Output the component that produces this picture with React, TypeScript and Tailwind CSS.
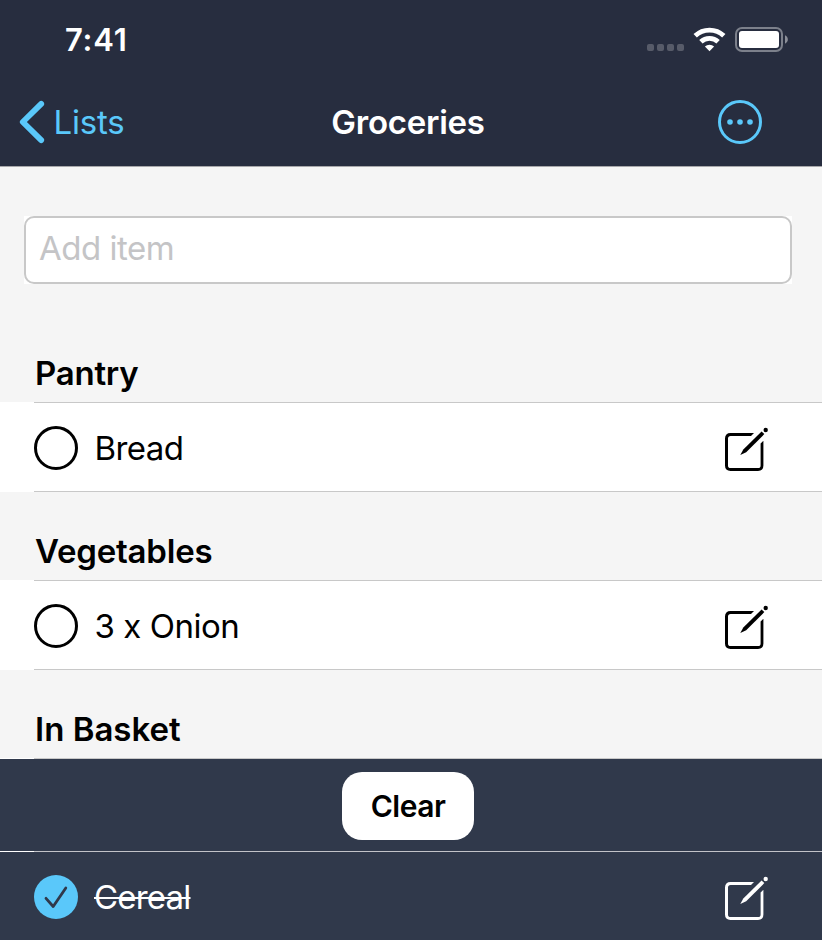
import React from "react";

function StatusIcons() {
  return (
    <svg width="146" height="32" viewBox="644 22 146 32" aria-hidden="true">
      <g fill="#575b69">
        <rect x="647" y="44" width="7" height="7" rx="2" />
        <rect x="657" y="44" width="7" height="7" rx="2" />
        <rect x="667" y="44" width="7" height="7" rx="2" />
        <rect x="677" y="44" width="7" height="7" rx="2" />
      </g>
      <g fill="none" stroke="#fff" strokeWidth="4.8">
        <path d="M695.2 35.8 A20.6 20.6 0 0 1 723.8 35.8" />
        <path d="M700.9 41.8 A12.4 12.4 0 0 1 718.1 41.8" />
      </g>
      <path d="M709.5 51.2 L704.9 46.6 A6.6 6.6 0 0 1 714.1 46.6 Z" fill="#fff" />
      <rect x="736" y="28" width="46" height="23" rx="6" fill="none" stroke="#7c808b" strokeWidth="2" />
      <rect x="739" y="31" width="40" height="17" rx="3" fill="#fff" />
      <path d="M785 35.3 C788.8 37 788.8 42 785 43.7 Z" fill="#8c8f99" />
    </svg>
  );
}

function EditIcon() {
  return (
    <svg width="48" height="48" viewBox="0 0 48 48" fill="currentColor" aria-hidden="true">
      <path d="M34 9 L31 12 H10.6 Q8 12 8 14.6 V41.4 Q8 44 10.6 44 H38 Q40.6 44 40.6 41.4 V19.6 L43.4 16.8 V41.6 Q43.4 47 38 47 H10.6 Q5 47 5 41.6 V14.6 Q5 9 10.6 9 Z" />
      <path d="M41.6 7.4 L44.3 10.1 L26.2 28.3 L20.3 31.1 L23.3 25.5 Z" />
      <circle cx="45.7" cy="6" r="2.2" />
    </svg>
  );
}

function Separator({ dark = false }: { dark?: boolean }) {
  return (
    <div className="flex h-px bg-white">
      <div className={dark ? "ml-[34px] grow bg-[#c2c3c8]" : "ml-[34px] grow bg-[#c8c8c8]"} />
    </div>
  );
}

function SectionTitle({ text, tracking }: { text: string; tracking: string }) {
  return <h2 className={`mb-[9px] pl-[35px] text-[33px] leading-[40px] font-semibold text-black ${tracking}`}>{text}</h2>;
}

function Item({ text, tracking }: { text: string; tracking: string }) {
  return (
    <div className="h-[90px] bg-white text-black">
      <Separator />
      <div className="flex h-[88px] items-center pt-0.5 pl-[34px]">
        <svg width="44" height="44" viewBox="0 0 44 44" aria-hidden="true">
          <circle cx="22" cy="22" r="20.5" fill="none" stroke="#000" strokeWidth="3" />
        </svg>
        <span className={`ml-[16.5px] grow text-[33px] leading-[44px] ${tracking}`}>{text}</span>
        <div className="mr-[54px]">
          <EditIcon />
        </div>
      </div>
      <div className="ml-[34px] h-px bg-[#c8c8c8]" />
    </div>
  );
}

export default function App() {
  return (
    <div className="flex h-[940px] w-[822px] flex-col overflow-hidden bg-[#f5f5f5] font-['Inter','Liberation_Sans',sans-serif] whitespace-nowrap">
      <header className="h-[167px] shrink-0 border-b border-[#a7a7aa] bg-[#272d3f]">
        <div className="flex h-[78px] items-start justify-between pt-[22px] pr-8 pl-[65px]">
          <span className="text-[31px] leading-[36px] font-semibold tracking-[0.8px] text-white">7:41</span>
          <StatusIcons />
        </div>
        <nav className="grid h-[88px] grid-cols-[280px_256px_1fr] items-center">
          <div className="flex items-center pl-[18px] text-[#5ac8fa]">
            <svg width="28" height="44" viewBox="0 0 28 44" fill="none" stroke="currentColor" strokeWidth="5.8" strokeLinecap="round" strokeLinejoin="round" aria-hidden="true">
              <path d="M23.2 3.9 L4.8 22 L23.2 40.1" />
            </svg>
            <span className="ml-[7.5px] text-[33px] leading-[44px] tracking-[-0.2px]">Lists</span>
          </div>
          <h1 className="text-center text-[33px] leading-[44px] font-semibold tracking-[-0.25px] text-white">Groceries</h1>
          <div className="flex justify-end pr-[60px]">
            <svg width="44" height="44" viewBox="0 0 44 44" aria-hidden="true">
              <circle cx="22" cy="22" r="20.5" fill="none" stroke="#5ac8fa" strokeWidth="3" />
              <g fill="#5ac8fa">
                <circle cx="12" cy="22" r="2.8" />
                <circle cx="22" cy="22" r="2.8" />
                <circle cx="32" cy="22" r="2.8" />
              </g>
            </svg>
          </div>
        </nav>
      </header>

      <div className="mt-[49px] mr-[30px] ml-6 h-[68px] shrink-0 bg-white">
        <div className="flex h-full items-center rounded-[10px] border-2 border-[#c8c8c8] pb-1 pl-[13px] text-[33px] leading-[44px] tracking-[-0.5px] text-[#c4c4c6]">
          Add item
        </div>
      </div>

      <section className="pt-[69px]">
        <SectionTitle text="Pantry" tracking="tracking-[-0.25px]" />
        <Item text="Bread" tracking="tracking-[-0.6px]" />
      </section>
      <section className="pt-[39px]">
        <SectionTitle text="Vegetables" tracking="tracking-[-0.2px]" />
        <Item text="3 x Onion" tracking="tracking-[-0.45px]" />
      </section>
      <section className="pt-[39px]">
        <SectionTitle text="In Basket" tracking="tracking-normal" />
        <Separator />
        <div className="flex h-[92px] justify-center bg-[#30394b] pt-[13px] pr-[6px]">
          <button className="h-[68px] w-[132px] rounded-[20px] bg-white text-[30px] font-semibold tracking-[-0.5px] text-black">Clear</button>
        </div>
        <Separator dark />
        <div className="flex h-[88px] items-center bg-[#30394b] pt-0.5 pl-[34px] text-white">
          <svg width="44" height="44" viewBox="0 0 44 44" aria-hidden="true">
            <circle cx="22" cy="22" r="22" fill="#5ac8fa" />
            <path d="M12 23.3 L19.2 31.5 L31.8 13" fill="none" stroke="#30394b" strokeWidth="2.8" strokeLinecap="round" strokeLinejoin="round" />
          </svg>
          <span className="ml-4 text-[33px] leading-[44px] tracking-[-0.8px] line-through decoration-2">Cereal</span>
          <div className="mr-[54px] ml-auto">
            <EditIcon />
          </div>
        </div>
      </section>
    </div>
  );
}
